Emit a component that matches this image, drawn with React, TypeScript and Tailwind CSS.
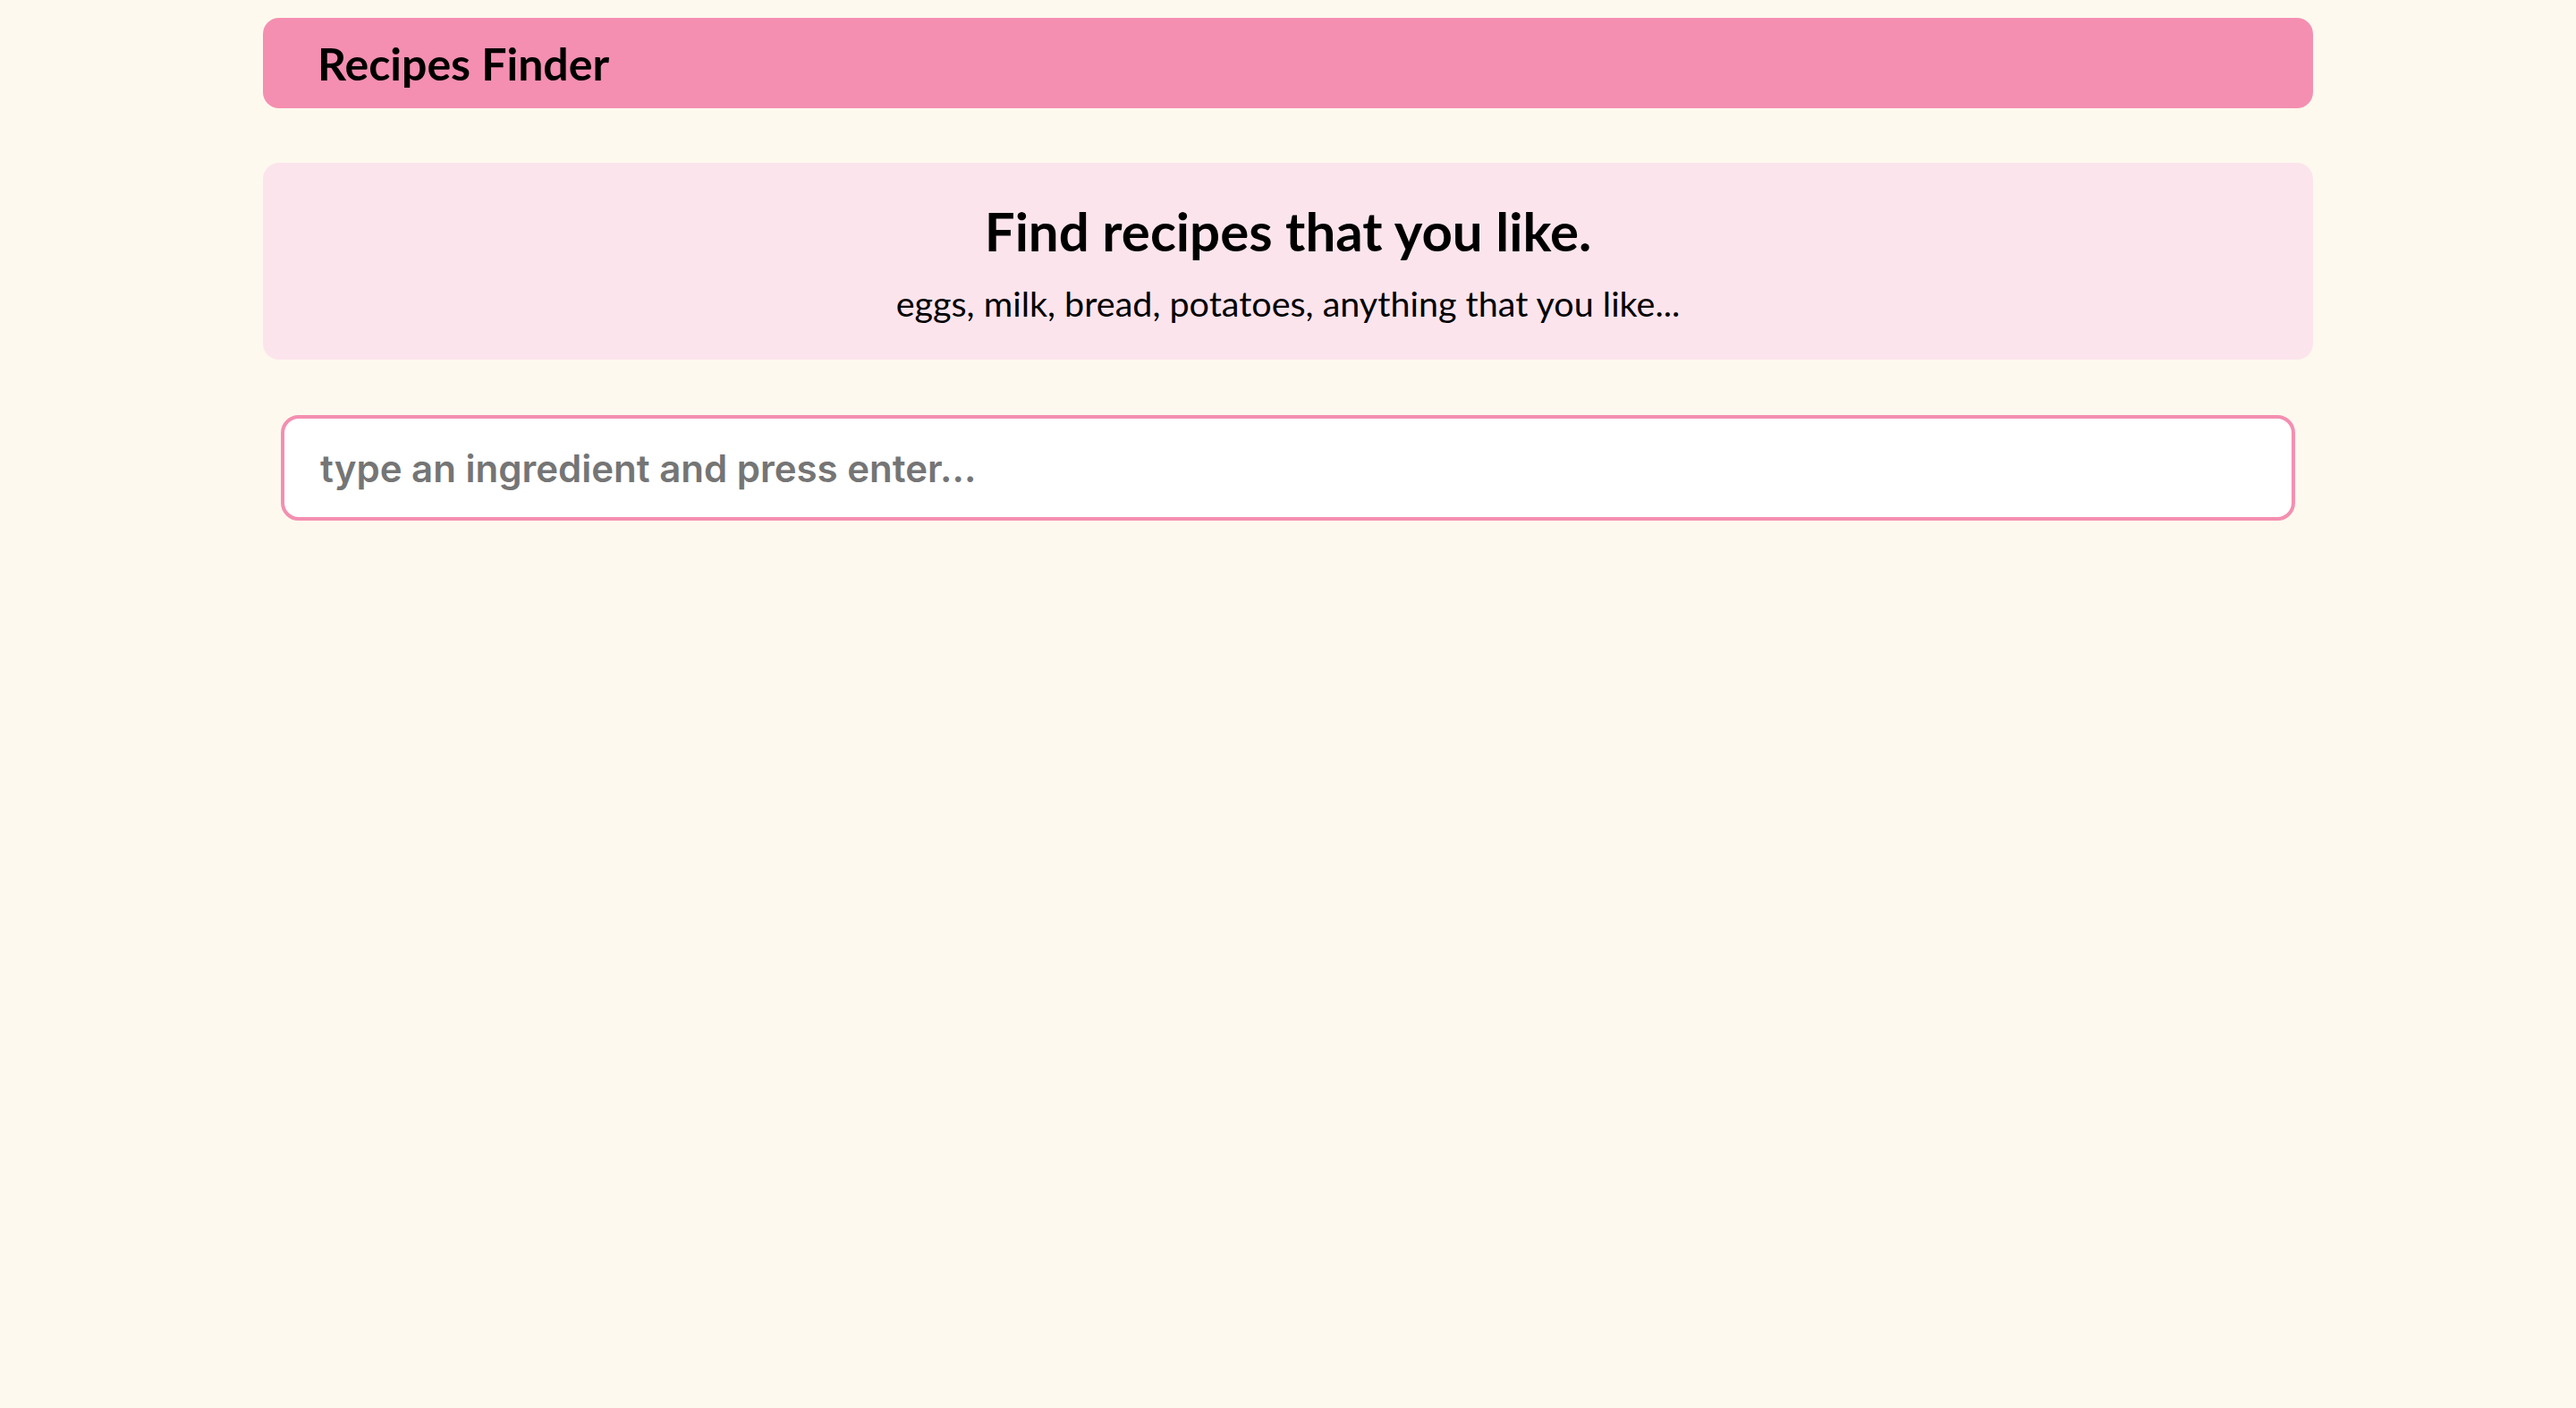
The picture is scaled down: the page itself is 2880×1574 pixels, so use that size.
import React from "react";

export default function App() {
  return (
    <div className="min-h-screen w-full bg-[#fef9ee]" style={{ fontFamily: "Lato, 'Noto Sans', sans-serif" }}>
      <div className="mx-auto w-[2292px] pt-[20px] flex flex-col">
        <header className="h-[101px] rounded-[18px] bg-[#f48fb1] flex items-center px-[61px]">
          <h1 className="text-[50px] font-bold text-black leading-none">Recipes Finder</h1>
        </header>
        <section className="mt-[61px] h-[220px] pt-[3px] rounded-[18px] bg-[#fce4ec] flex flex-col items-center justify-center">
          <h2 className="text-[60px] font-bold text-black leading-none">Find recipes that you like.</h2>
          <p className="mt-[31px] text-[39.5px] text-black leading-none">eggs, milk, bread, potatoes, anything that you like...</p>
        </section>
        <div className="mt-[62px] px-[20px]">
          <input
            type="text"
            placeholder="type an ingredient and press enter..."
            className="w-full h-[118px] rounded-[20px] border-[4px] border-[#f48fb1] bg-white px-[40px] text-[42px] font-semibold text-[#757575] placeholder:text-[#757575] outline-none"
            style={{ fontFamily: "Inter, 'Noto Sans', sans-serif" }}
          />
        </div>
      </div>
    </div>
  );
}
